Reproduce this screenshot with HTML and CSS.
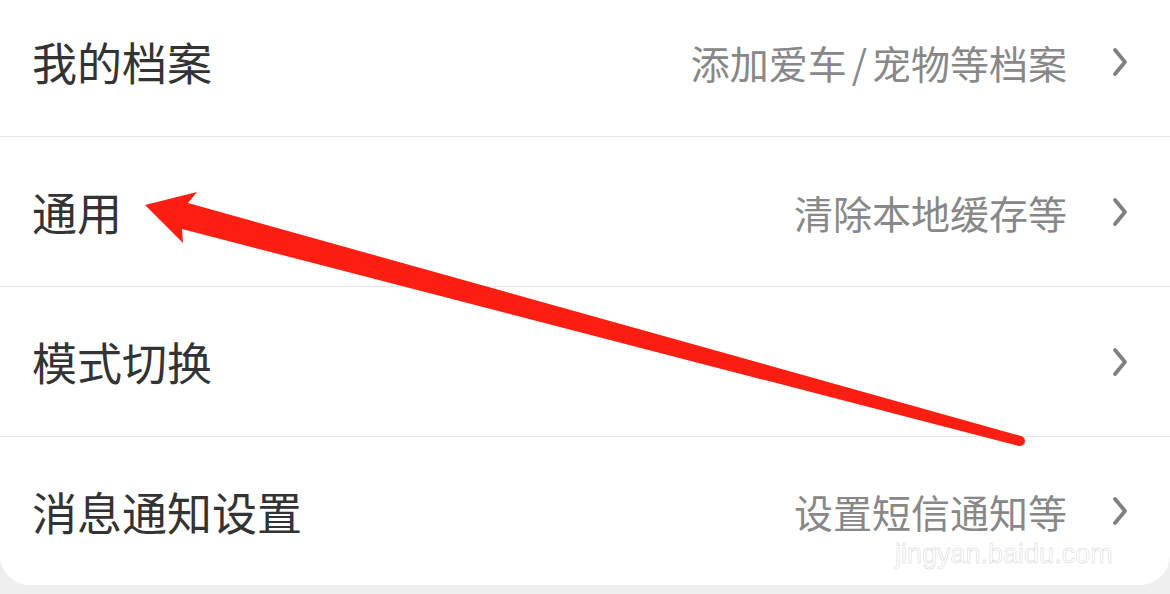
FILE: index.html
```html
<!DOCTYPE html>
<html lang="zh-CN">
<head>
  <meta charset="UTF-8">
  <meta name="viewport" content="width=device-width, initial-scale=1">
  <title>设置</title>
  <link rel="stylesheet" href="styles.css">
</head>
<body>

  <div class="card">
    <div class="row">
      <span class="title">我的档案</span>
      <span class="sub">添加爱车<span class="slash">/</span>宠物等档案</span>
      <svg class="chev" viewBox="0 0 16 30"><polyline points="3,3 13,15 3,27"/></svg>
    </div>
    <div class="row">
      <span class="title">通用</span>
      <span class="sub">清除本地缓存等</span>
      <svg class="chev" viewBox="0 0 16 30"><polyline points="3,3 13,15 3,27"/></svg>
    </div>
    <div class="row">
      <span class="title">模式切换</span>
      <span class="sub"></span>
      <svg class="chev" viewBox="0 0 16 30"><polyline points="3,3 13,15 3,27"/></svg>
    </div>
    <div class="row last">
      <span class="title">消息通知设置</span>
      <span class="sub">设置短信通知等</span>
      <svg class="chev" viewBox="0 0 16 30"><polyline points="3,3 13,15 3,27"/></svg>
    </div>
  </div>

  <!-- red annotation arrow drawn over the list -->
  <svg class="arrow" viewBox="0 0 1170 594">
    <polygon points="145,205 197,192 188,203 1021,436 1019,446 182,229 183,243"/>
    <circle cx="1020" cy="441" r="5"/>
  </svg>

  <div class="watermark">jingyan.baidu.com</div>

</body>
</html>
```

FILE: styles.css
```css
body {
  margin: 0;
  padding: 0;
  width: 1170px;
  height: 594px;
  overflow: hidden;
  background: #efefef;
  font-family: "Noto Sans CJK SC", "Noto Sans", sans-serif;
  position: relative;
}

.card {
  background: #ffffff;
  margin-top: -13px;
  height: 598px;
  border-radius: 0 0 30px 30px;
  display: flex;
  flex-direction: column;
}

.row {
  height: 149px;
  border-bottom: 1px solid #e6e6e6;
  display: flex;
  align-items: center;
  padding: 0 42px 0 32px;
}

.row.last {
  border-bottom: none;
  height: 148px;
}

.title {
  flex: 1;
  font-size: 45px;
  color: #333333;
}

.sub {
  font-size: 39px;
  color: #888888;
  margin-right: 45px;
}

.slash {
  margin: 0 5px;
}

.chev {
  width: 16px;
  height: 30px;
}

.chev polyline {
  fill: none;
  stroke: #808080;
  stroke-width: 3.8;
  stroke-linecap: round;
  stroke-linejoin: round;
}

.arrow {
  position: absolute;
  left: 0;
  top: 0;
  width: 1170px;
  height: 594px;
}

.arrow polygon,
.arrow circle {
  fill: #fd1e12;
}

.watermark {
  position: absolute;
  left: 895px;
  top: 540px;
  width: 215px;
  text-align: center;
  font-family: "Liberation Sans", sans-serif;
  font-size: 27px;
  line-height: 28px;
  color: rgba(255, 255, 255, 0.55);
  -webkit-text-stroke: 1px rgba(0, 0, 0, 0.12);
}
```
